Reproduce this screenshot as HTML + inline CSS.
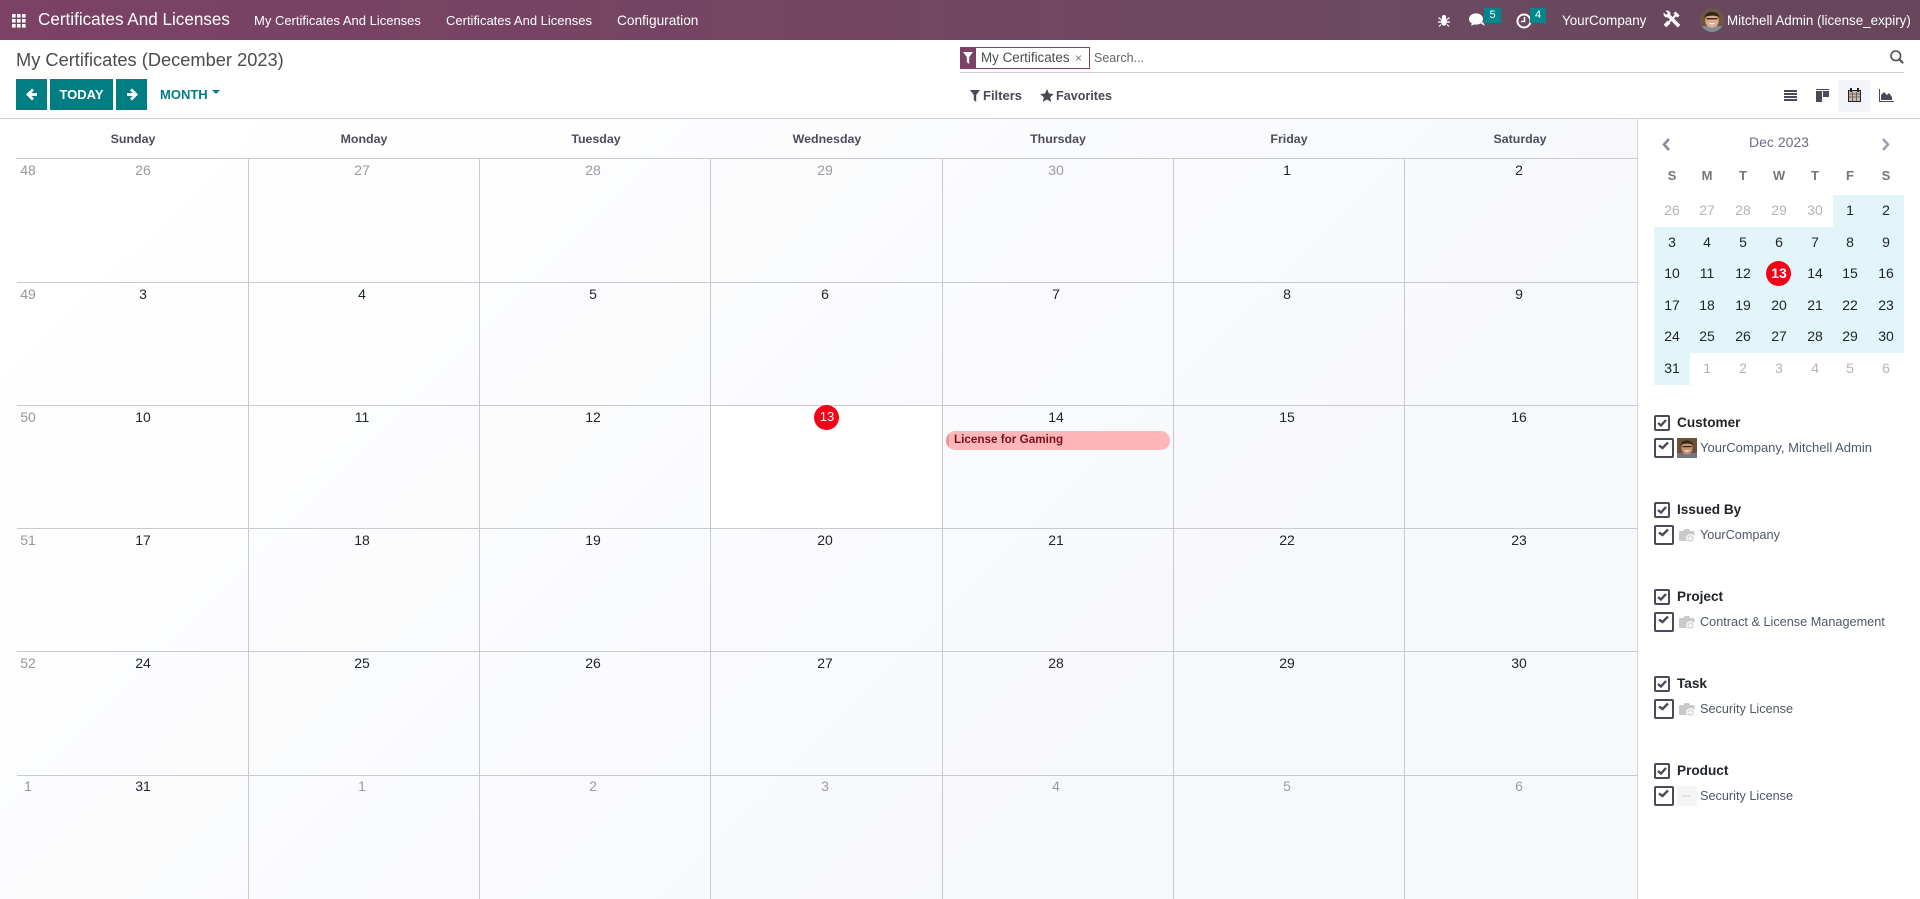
<!DOCTYPE html>
<html><head><meta charset="utf-8"><title>My Certificates</title>
<style>
html,body{margin:0;padding:0;width:1920px;height:899px;overflow:hidden;background:#fff}
body{position:relative;font-family:"Liberation Sans",sans-serif;color:#212529;font-size:14px}
.a{position:absolute}
.t{position:absolute;white-space:nowrap;height:20px;line-height:20px}
.c{position:absolute;width:80px;margin-left:-40px;text-align:center;height:20px;line-height:20px;white-space:nowrap}
.g{color:#9b9ba3}
.w{color:#96969c;width:30px;margin-left:-15px}
.h{font-weight:700;font-size:12.4px;color:#4c4c5c;top:129px}
.n{color:#fff;font-size:13px;top:11px}
.v{background:#c9c9d3;width:1px;top:158px;height:741px}
.r{background:#c9c9d3;height:1px;left:17px;width:1620px}
.m{width:36px;margin-left:-18px}
.mg{color:#b4b4b4}
.mh{font-weight:700;font-size:13px;color:#75757d;top:166px}
.gl{font-weight:700;font-size:13.6px;color:#212529;left:1677px}
.gi{font-size:12.7px;color:#4f5868;left:1700px}
.cb1{left:1654px}.cb2{left:1654px}
.btn{position:absolute;top:79px;height:31px;background:#017e84;color:#fff;text-align:center;line-height:31px;font-weight:700;font-size:13px}
</style></head><body>
<!-- nav -->
<div class="a" style="left:0;top:0;width:1920px;height:40px;background:linear-gradient(90deg,#7c4164,#6b4a5f 75%,#67465c)"></div>
<svg class="a" style="left:12px;top:14px" width="14" height="14" fill="#fff"><rect x="0" y="0" width="3.6" height="3.6"/><rect x="5" y="0" width="3.6" height="3.6"/><rect x="10" y="0" width="3.6" height="3.6"/><rect x="0" y="5" width="3.6" height="3.6"/><rect x="5" y="5" width="3.6" height="3.6"/><rect x="10" y="5" width="3.6" height="3.6"/><rect x="0" y="10" width="3.6" height="3.6"/><rect x="5" y="10" width="3.6" height="3.6"/><rect x="10" y="10" width="3.6" height="3.6"/></svg>
<div class="t" style="left:38px;top:10px;color:#fff;font-size:17.1px">Certificates And Licenses</div>
<div class="t n" style="left:254px">My Certificates And Licenses</div>
<div class="t n" style="left:446px">Certificates And Licenses</div>
<div class="t n" style="left:617px;font-size:13.7px">Configuration</div>
<svg class="a" style="left:1438px;top:14px" width="12" height="13" fill="#fff" stroke="#fff"><ellipse cx="6" cy="7.5" rx="3" ry="4.2" stroke="none"/><circle cx="6" cy="3" r="2" stroke="none"/><path d="M0.5 3.5l2.5 2M11.5 3.5l-2.5 2M0 8h3M12 8H9M1 12.5l2-2M11 12.5l-2-2" stroke-width="1.2" fill="none"/></svg>
<svg class="a" style="left:1469px;top:12px" width="17" height="16" fill="#fff"><ellipse cx="7" cy="7" rx="7" ry="5.6"/><path d="M3 11l-1 3 4-2zM11 11l5 3-2-4z"/></svg>
<div class="a" style="left:1484px;top:8px;width:17px;height:15px;background:#00868b;color:#fff;font-size:11px;line-height:14px;text-align:center">5</div>
<svg class="a" style="left:1516px;top:13px" width="16" height="16" fill="none" stroke="#fff" stroke-width="2"><circle cx="8" cy="8" r="6.5"/><path d="M8.5 4v4.5H5" stroke-width="1.6"/></svg>
<div class="a" style="left:1530px;top:8px;width:16px;height:15px;background:#00868b;color:#fff;font-size:11px;line-height:14px;text-align:center">4</div>
<div class="t" style="left:1562px;top:11px;color:#fff;font-size:13.4px">YourCompany</div>
<svg class="a" style="left:1663px;top:10px" width="18" height="18" fill="none" stroke="#fff"><path d="M5 5l11 11.200" stroke-width="3.600"/><circle cx="4" cy="4" r="3.500" fill="#fff" stroke="none"/><path d="M0 0l4 4" stroke="#6b4a5f" stroke-width="2.600"/><path d="M13 5L6 12" stroke-width="2"/><path d="M6 12l-4 4" stroke-width="3.800"/><path d="M11.500 2.500l4 4" stroke-width="3"/></svg>
<svg class="a" style="left:1700px;top:8px" width="24" height="24"><defs><clipPath id="av"><circle cx="12" cy="12" r="12"/></clipPath></defs><g clip-path="url(#av)"><rect width="24" height="24" fill="#6e5640"/><rect y="18" width="24" height="6" fill="#7d8c96"/><ellipse cx="12" cy="12.500" rx="6.800" ry="7.500" fill="#dca98a"/><path d="M4.500 9.500c0-7 14-8 15 0-4-2.500-10-2.500-15 0z" fill="#33251c"/><rect x="6.500" y="10" width="11" height="1.400" fill="#33251c"/><path d="M8.500 15c2 2 5 2 7 0z" fill="#fff"/></g></svg>
<div class="t" style="left:1727px;top:11px;color:#fff;font-size:13.4px">Mitchell Admin (license_expiry)</div>

<!-- control panel -->
<div class="t" style="left:16px;top:50px;font-size:18.25px;color:#4c4c4c">My Certificates (December 2023)</div>
<div class="btn" style="left:16px;width:31px"><svg width="12" height="13" style="vertical-align:-2px" fill="none" stroke="#fff" stroke-width="2.800"><path d="M11 6.500H3M7 1.500l-5 5 5 5"/></svg></div>
<div class="btn" style="left:50px;width:63px">TODAY</div>
<div class="btn" style="left:116px;width:31px"><svg width="12" height="13" style="vertical-align:-2px" fill="none" stroke="#fff" stroke-width="2.800"><path d="M1 6.500h8M5 1.500l5 5-5 5"/></svg></div>
<div class="t" style="left:160px;top:85px;color:#017e84;font-weight:700;font-size:13px">MONTH</div>
<div class="a" style="left:212px;top:90px;width:0;height:0;border-left:4px solid transparent;border-right:4px solid transparent;border-top:4.500px solid #017e84"></div>

<div class="a" style="left:960px;top:47px;width:128px;height:20px;border:1px solid #7c4164"></div>
<div class="a" style="left:960px;top:47px;width:16px;height:22px;background:#7c4164"></div>
<svg class="a" style="left:963px;top:52px" width="10" height="12" fill="#fff"><path d="M0 0h10L6.200 5v7L3.800 10V5z"/></svg>
<div class="t" style="left:981px;top:48px;font-size:13.4px;color:#4c4c4c">My Certificates</div>
<div class="t" style="left:1075px;top:48px;font-size:12px;color:#777">×</div>
<div class="t" style="left:1094px;top:48px;font-size:12.500px;color:#666">Search...</div>
<svg class="a" style="left:1890px;top:50px" width="14" height="14" fill="none" stroke="#4c4c4c" stroke-width="1.600"><circle cx="5.800" cy="5.800" r="4.800"/><path d="M9.200 9.200l4 4" stroke-width="2"/></svg>
<div class="a" style="left:960px;top:72px;width:944px;height:1px;background:#cfcfd6"></div>

<svg class="a" style="left:970px;top:90px" width="10" height="12" fill="#4a4a57"><path d="M0 0h10L6.200 5v7L3.800 10V5z"/></svg>
<div class="t" style="left:983px;top:86px;font-size:13px;color:#4a4a57;font-weight:700">Filters</div>
<svg class="a" style="left:1040px;top:89px" width="14" height="13" fill="#4a4a57"><path d="M7 0l2 4.500 4.800.5-3.600 3.200 1 4.800L7 10.500 2.800 13l1-4.800L.2 5 5 4.500z"/></svg>
<div class="t" style="left:1056px;top:86px;font-size:12.600px;color:#4a4a57;font-weight:700">Favorites</div>

<svg class="a" style="left:1784px;top:90px" width="13" height="11" fill="#4a4a5a"><rect width="13" height="2"/><rect y="3" width="13" height="2"/><rect y="6" width="13" height="2"/><rect y="9" width="13" height="2"/></svg>
<svg class="a" style="left:1816px;top:89px" width="13" height="13" fill="#4a4a5a"><rect width="13" height="1"/><rect y="2" width="6" height="11"/><rect x="7" y="2" width="6" height="6"/></svg>
<div class="a" style="left:1838px;top:80px;width:32px;height:32px;background:#f3f4f9"></div>
<svg class="a" style="left:1848px;top:88px" width="13" height="14"><rect x="0.500" y="2.500" width="12" height="11" fill="#c8b8b0" stroke="#222"/><rect x="2" y="0" width="2" height="4" fill="#222"/><rect x="9" y="0" width="2" height="4" fill="#222"/><path d="M1 6h11M1 9h11M4.500 4v9M8.500 4v9" stroke="#555" stroke-width=".8"/></svg>
<svg class="a" style="left:1879px;top:89px" width="15" height="13"><path d="M0.500 0v12.500H15" fill="none" stroke="#4a4a5a"/><path d="M2 11V6l3-3 3 3 2-2 3 4v3z" fill="#4a4a5a"/></svg>

<div class="a" style="left:0;top:118px;width:1920px;height:1px;background:#cfcfd6"></div>

<!-- calendar -->
<div class="a" style="left:0;top:119px;width:1637px;height:780px;background:linear-gradient(135deg,#fff 8%,#f7f8fb 72%)"></div>
<div class="a" style="left:711px;top:406px;width:231px;height:122px;background:#fff"></div>
<div class="a" style="left:16px;top:158px;width:1621px;height:1px;background:#c9c9d3"></div>
<div class="a r" style="top:282px"></div><div class="a r" style="top:405px"></div><div class="a r" style="top:528px"></div><div class="a r" style="top:651px"></div><div class="a r" style="top:775px"></div>
<div class="a v" style="left:248px"></div><div class="a v" style="left:479px"></div><div class="a v" style="left:710px"></div><div class="a v" style="left:942px"></div><div class="a v" style="left:1173px"></div><div class="a v" style="left:1404px"></div>
<div class="a" style="left:1637px;top:119px;width:1px;height:780px;background:#d4d4da"></div>

<div class="c h" style="left:133px">Sunday</div><div class="c h" style="left:364px">Monday</div><div class="c h" style="left:596px">Tuesday</div><div class="c h" style="left:827px">Wednesday</div><div class="c h" style="left:1058px">Thursday</div><div class="c h" style="left:1289px">Friday</div><div class="c h" style="left:1520px">Saturday</div>

<div class="c w" style="left:28px;top:160px">48</div><div class="c g" style="left:143px;top:160px">26</div><div class="c g" style="left:362px;top:160px">27</div><div class="c g" style="left:593px;top:160px">28</div><div class="c g" style="left:825px;top:160px">29</div><div class="c g" style="left:1056px;top:160px">30</div><div class="c" style="left:1287px;top:160px">1</div><div class="c" style="left:1519px;top:160px">2</div>
<div class="c w" style="left:28px;top:284px">49</div><div class="c" style="left:143px;top:284px">3</div><div class="c" style="left:362px;top:284px">4</div><div class="c" style="left:593px;top:284px">5</div><div class="c" style="left:825px;top:284px">6</div><div class="c" style="left:1056px;top:284px">7</div><div class="c" style="left:1287px;top:284px">8</div><div class="c" style="left:1519px;top:284px">9</div>
<div class="c w" style="left:28px;top:407px">50</div><div class="c" style="left:143px;top:407px">10</div><div class="c" style="left:362px;top:407px">11</div><div class="c" style="left:593px;top:407px">12</div>
<div class="a" style="left:814px;top:405px;width:25px;height:25px;border-radius:50%;background:#f6001a"></div><div class="c" style="left:827px;top:407px;color:#fff;font-size:13px">13</div>
<div class="c" style="left:1056px;top:407px">14</div><div class="c" style="left:1287px;top:407px">15</div><div class="c" style="left:1519px;top:407px">16</div>
<div class="c w" style="left:28px;top:530px">51</div><div class="c" style="left:143px;top:530px">17</div><div class="c" style="left:362px;top:530px">18</div><div class="c" style="left:593px;top:530px">19</div><div class="c" style="left:825px;top:530px">20</div><div class="c" style="left:1056px;top:530px">21</div><div class="c" style="left:1287px;top:530px">22</div><div class="c" style="left:1519px;top:530px">23</div>
<div class="c w" style="left:28px;top:653px">52</div><div class="c" style="left:143px;top:653px">24</div><div class="c" style="left:362px;top:653px">25</div><div class="c" style="left:593px;top:653px">26</div><div class="c" style="left:825px;top:653px">27</div><div class="c" style="left:1056px;top:653px">28</div><div class="c" style="left:1287px;top:653px">29</div><div class="c" style="left:1519px;top:653px">30</div>
<div class="c w" style="left:28px;top:776px">1</div><div class="c" style="left:143px;top:776px">31</div><div class="c g" style="left:362px;top:776px">1</div><div class="c g" style="left:593px;top:776px">2</div><div class="c g" style="left:825px;top:776px">3</div><div class="c g" style="left:1056px;top:776px">4</div><div class="c g" style="left:1287px;top:776px">5</div><div class="c g" style="left:1519px;top:776px">6</div>

<div class="a" style="left:946px;top:431px;width:224px;height:19px;background:#ffb6b9;border-radius:9.500px;overflow:hidden"><div class="a" style="left:0;top:0;width:3px;height:19px;background:#f68f96"></div></div>
<div class="t" style="left:954px;top:430px;font-size:11.700px;font-weight:700;color:#7b1019">License for Gaming</div>

<!-- mini calendar -->
<svg class="a" style="left:1661px;top:138px" width="10" height="13" fill="none" stroke="#8a8a98" stroke-width="2.600"><path d="M8 1L3 6.500l5 5.500"/></svg>
<svg class="a" style="left:1881px;top:138px" width="10" height="13" fill="none" stroke="#a0a0ae" stroke-width="2.600"><path d="M2 1l5 5.500L2 12"/></svg>
<div class="c" style="left:1779px;top:132px;color:#6b6d85">Dec 2023</div>
<div class="c m mh" style="left:1672px">S</div><div class="c m mh" style="left:1707px">M</div><div class="c m mh" style="left:1743px">T</div><div class="c m mh" style="left:1779px">W</div><div class="c m mh" style="left:1815px">T</div><div class="c m mh" style="left:1850px">F</div><div class="c m mh" style="left:1886px">S</div>
<div class="a" style="left:1833px;top:195px;width:71px;height:32px;background:#e2f5f8"></div>
<div class="a" style="left:1654px;top:227px;width:250px;height:126px;background:#e2f5f8"></div>
<div class="a" style="left:1654px;top:353px;width:36px;height:32px;background:#e2f5f8"></div>
<div class="c m mg" style="left:1672px;top:200px">26</div><div class="c m mg" style="left:1707px;top:200px">27</div><div class="c m mg" style="left:1743px;top:200px">28</div><div class="c m mg" style="left:1779px;top:200px">29</div><div class="c m mg" style="left:1815px;top:200px">30</div><div class="c m" style="left:1850px;top:200px">1</div><div class="c m" style="left:1886px;top:200px">2</div>
<div class="c m" style="left:1672px;top:232px">3</div><div class="c m" style="left:1707px;top:232px">4</div><div class="c m" style="left:1743px;top:232px">5</div><div class="c m" style="left:1779px;top:232px">6</div><div class="c m" style="left:1815px;top:232px">7</div><div class="c m" style="left:1850px;top:232px">8</div><div class="c m" style="left:1886px;top:232px">9</div>
<div class="a" style="left:1766px;top:261px;width:25px;height:25px;border-radius:50%;background:#f6001a"></div>
<div class="c m" style="left:1672px;top:263px">10</div><div class="c m" style="left:1707px;top:263px">11</div><div class="c m" style="left:1743px;top:263px">12</div><div class="c m" style="left:1779px;top:263px;color:#fff;font-weight:700">13</div><div class="c m" style="left:1815px;top:263px">14</div><div class="c m" style="left:1850px;top:263px">15</div><div class="c m" style="left:1886px;top:263px">16</div>
<div class="c m" style="left:1672px;top:295px">17</div><div class="c m" style="left:1707px;top:295px">18</div><div class="c m" style="left:1743px;top:295px">19</div><div class="c m" style="left:1779px;top:295px">20</div><div class="c m" style="left:1815px;top:295px">21</div><div class="c m" style="left:1850px;top:295px">22</div><div class="c m" style="left:1886px;top:295px">23</div>
<div class="c m" style="left:1672px;top:326px">24</div><div class="c m" style="left:1707px;top:326px">25</div><div class="c m" style="left:1743px;top:326px">26</div><div class="c m" style="left:1779px;top:326px">27</div><div class="c m" style="left:1815px;top:326px">28</div><div class="c m" style="left:1850px;top:326px">29</div><div class="c m" style="left:1886px;top:326px">30</div>
<div class="c m" style="left:1672px;top:358px">31</div><div class="c m mg" style="left:1707px;top:358px">1</div><div class="c m mg" style="left:1743px;top:358px">2</div><div class="c m mg" style="left:1779px;top:358px">3</div><div class="c m mg" style="left:1815px;top:358px">4</div><div class="c m mg" style="left:1850px;top:358px">5</div><div class="c m mg" style="left:1886px;top:358px">6</div>

<!-- filters -->
<svg class="a cb1" style="top:415px" width="16" height="16"><rect x="1" y="1" width="14" height="14" rx="1" fill="#fff" stroke="#4a4a5a" stroke-width="2"/><path d="M4 8l3 2.500L12 5" fill="none" stroke="#4a4a5a" stroke-width="2.400"/></svg>
<div class="t gl" style="top:413px">Customer</div>
<svg class="a cb2" style="top:438px" width="20" height="20"><rect x="1" y="1" width="18" height="18" rx="1" fill="#fff" stroke="#4a4a5a" stroke-width="2"/><path d="M5 7.500l3.500 2.500L14 4.500" fill="none" stroke="#4a4a5a" stroke-width="2.400"/></svg>
<svg class="a" style="left:1677px;top:438px" width="20" height="20"><rect width="20" height="20" fill="#6e4f3a"/><rect y="15" width="20" height="5" fill="#70787c"/><ellipse cx="10" cy="10" rx="5.500" ry="6.500" fill="#c9926f"/><path d="M4 7c1-6 11-6 12 0-3-2-9-2-12 0z" fill="#33251c"/><rect x="5.500" y="8" width="9" height="1.200" fill="#33251c"/><path d="M7 12.500c2 1.500 4 1.500 6 0z" fill="#fff"/></svg>
<div class="t gi" style="top:438px;font-size:13px">YourCompany, Mitchell Admin</div>

<svg class="a cb1" style="top:502px" width="16" height="16"><rect x="1" y="1" width="14" height="14" rx="1" fill="#fff" stroke="#4a4a5a" stroke-width="2"/><path d="M4 8l3 2.500L12 5" fill="none" stroke="#4a4a5a" stroke-width="2.400"/></svg>
<div class="t gl" style="top:500px">Issued By</div>
<svg class="a cb2" style="top:525px" width="20" height="20"><rect x="1" y="1" width="18" height="18" rx="1" fill="#fff" stroke="#4a4a5a" stroke-width="2"/><path d="M5 7.500l3.500 2.500L14 4.500" fill="none" stroke="#4a4a5a" stroke-width="2.400"/></svg>
<svg class="a" style="left:1679px;top:529px" width="16" height="14"><path d="M1 2h3.500l1-2h4.500l1 2h3.500q1 0 1 1v8q0 1-1 1H1q-1 0-1-1V3q0-1 1-1z" fill="#c9c9c9"/><circle cx="11.500" cy="9.500" r="4" fill="#dedede" stroke="#fff"/><path d="M11.500 7.500v4M9.500 9.500h4" stroke="#fff"/></svg>
<div class="t gi" style="top:525px">YourCompany</div>

<svg class="a cb1" style="top:589px" width="16" height="16"><rect x="1" y="1" width="14" height="14" rx="1" fill="#fff" stroke="#4a4a5a" stroke-width="2"/><path d="M4 8l3 2.500L12 5" fill="none" stroke="#4a4a5a" stroke-width="2.400"/></svg>
<div class="t gl" style="top:587px">Project</div>
<svg class="a cb2" style="top:612px" width="20" height="20"><rect x="1" y="1" width="18" height="18" rx="1" fill="#fff" stroke="#4a4a5a" stroke-width="2"/><path d="M5 7.500l3.500 2.500L14 4.500" fill="none" stroke="#4a4a5a" stroke-width="2.400"/></svg>
<svg class="a" style="left:1679px;top:616px" width="16" height="14"><path d="M1 2h3.500l1-2h4.500l1 2h3.500q1 0 1 1v8q0 1-1 1H1q-1 0-1-1V3q0-1 1-1z" fill="#c9c9c9"/><circle cx="11.500" cy="9.500" r="4" fill="#dedede" stroke="#fff"/><path d="M11.500 7.500v4M9.500 9.500h4" stroke="#fff"/></svg>
<div class="t gi" style="top:612px">Contract &amp; License Management</div>

<svg class="a cb1" style="top:676px" width="16" height="16"><rect x="1" y="1" width="14" height="14" rx="1" fill="#fff" stroke="#4a4a5a" stroke-width="2"/><path d="M4 8l3 2.500L12 5" fill="none" stroke="#4a4a5a" stroke-width="2.400"/></svg>
<div class="t gl" style="top:674px">Task</div>
<svg class="a cb2" style="top:699px" width="20" height="20"><rect x="1" y="1" width="18" height="18" rx="1" fill="#fff" stroke="#4a4a5a" stroke-width="2"/><path d="M5 7.500l3.500 2.500L14 4.500" fill="none" stroke="#4a4a5a" stroke-width="2.400"/></svg>
<svg class="a" style="left:1679px;top:703px" width="16" height="14"><path d="M1 2h3.500l1-2h4.500l1 2h3.500q1 0 1 1v8q0 1-1 1H1q-1 0-1-1V3q0-1 1-1z" fill="#c9c9c9"/><circle cx="11.500" cy="9.500" r="4" fill="#dedede" stroke="#fff"/><path d="M11.500 7.500v4M9.500 9.500h4" stroke="#fff"/></svg>
<div class="t gi" style="top:699px">Security License</div>

<svg class="a cb1" style="top:763px" width="16" height="16"><rect x="1" y="1" width="14" height="14" rx="1" fill="#fff" stroke="#4a4a5a" stroke-width="2"/><path d="M4 8l3 2.500L12 5" fill="none" stroke="#4a4a5a" stroke-width="2.400"/></svg>
<div class="t gl" style="top:761px">Product</div>
<svg class="a cb2" style="top:786px" width="20" height="20"><rect x="1" y="1" width="18" height="18" rx="1" fill="#fff" stroke="#4a4a5a" stroke-width="2"/><path d="M5 7.500l3.500 2.500L14 4.500" fill="none" stroke="#4a4a5a" stroke-width="2.400"/></svg>
<svg class="a" style="left:1677px;top:786px" width="20" height="20"><rect width="20" height="20" fill="#f5f5f5"/><rect x="5" y="9" width="9" height="2" fill="#e4e4e4"/></svg>
<div class="t gi" style="top:786px">Security License</div>
</body></html>
